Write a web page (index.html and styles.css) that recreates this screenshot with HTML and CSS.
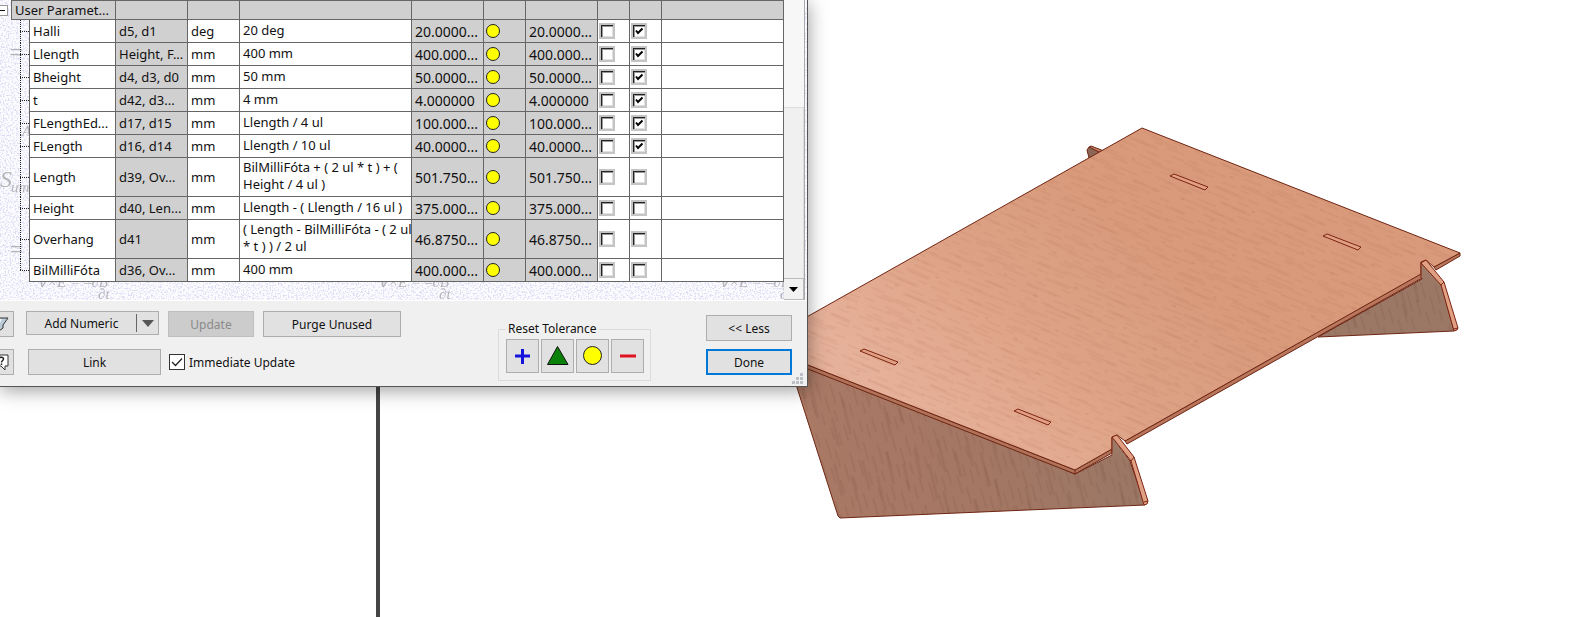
FILE: index.html
```html
<!DOCTYPE html>
<html lang="en">
<head>
<meta charset="utf-8">
<title>Parameters</title>
<link rel="stylesheet" href="styles.css">
</head>
<body>
<main class="workspace">
  <aside class="browser-pane"></aside>
  <section class="viewport">
    <svg class="model" viewBox="380 0 1205 617" preserveAspectRatio="xMinYMin slice" role="img" aria-label="Wooden stand model">
      <defs>
        <linearGradient id="top" gradientUnits="userSpaceOnUse" x1="940" y1="440" x2="1130" y2="230">
          <stop offset="0" stop-color="#e6b19a"/><stop offset="0.55" stop-color="#dda285"/><stop offset="1" stop-color="#d89a7b"/>
        </linearGradient>
        <linearGradient id="leg" gradientUnits="userSpaceOnUse" x1="820" y1="500" x2="1140" y2="440">
          <stop offset="0" stop-color="#a97965"/><stop offset="0.5" stop-color="#a37764"/><stop offset="1" stop-color="#9b7766"/>
        </linearGradient>
        <pattern id="grainA" width="83" height="31" patternUnits="userSpaceOnUse" patternTransform="rotate(22)">
          <path d="M2 2h14M30 4h22M62 3h12M10 8h18M44 9h9M58 10h20M0 14h11M22 15h20M66 16h13M6 20h24M40 21h14M60 22h9M14 26h10M34 27h26M70 28h11" stroke="#a8583a" stroke-opacity=".1" stroke-width="1.500"/>
        </pattern>
        <pattern id="grainB" width="131" height="47" patternUnits="userSpaceOnUse" patternTransform="rotate(24)">
          <path d="M8 5h30M70 9h40M20 17h26M90 21h30M4 29h34M60 33h28M30 41h40M100 43h22" stroke="#a8583a" stroke-opacity=".08" stroke-width="3"/>
          <path d="M50 13h4M112 30h3M16 37h4" stroke="#7a3a22" stroke-opacity=".18"/>
        </pattern>
        <pattern id="grainC" width="71" height="29" patternUnits="userSpaceOnUse" patternTransform="rotate(74)">
          <path d="M2 2h16M30 4h20M56 7h12M8 9h14M40 12h18M2 15h12M24 17h18M54 20h14M10 23h20M40 26h16" stroke="#5a3424" stroke-opacity=".12" stroke-width="1.500"/>
        </pattern>
        <pattern id="grainD" width="127" height="53" patternUnits="userSpaceOnUse" patternTransform="rotate(77)">
          <path d="M8 5h30M70 11h36M20 19h26M86 25h30M4 33h34M56 39h28M26 47h36" stroke="#5a3424" stroke-opacity=".1" stroke-width="3"/>
        </pattern>
        <path id="legShape" d="M785 350 838 516 840 518 1145 505 1130 461 1112 438V455L1075 474ZM1422 263V279L1318 337 1454 331 1441 283Z"/>
        <path id="plate" d="M1142 128 1460 253 1434 267 1426 260 1421 262V274L1125 441 1117 435 1112 437V449L1075 470 757 345Z"/>
      </defs>
      <g stroke="#6e2412" stroke-width="1" stroke-linejoin="round">
        <path fill="#8b6656" d="M1087 150 1089 147 1103 152 1089 158Z"/>
        <path fill="#c58468" d="M1089 147 1091 146 1104 151 1101 153Z"/>
        <use href="#legShape" fill="url(#leg)"/>
      </g>
      <use href="#legShape" fill="url(#grainC)"/>
      <use href="#legShape" fill="url(#grainD)"/>
      <g stroke="#6e2412" stroke-width="1" stroke-linejoin="round">
        <path fill="#b07359" d="M757 345 1075 470 1112 449V453L1075 474 757 349Z"/>
        <path fill="#b8775d" d="M1125 441 1422 273V278L1127 444ZM1434 267 1460 253V256L1436 270Z"/>
        <use href="#plate" fill="url(#top)"/>
      </g>
      <use href="#plate" fill="url(#grainA)"/>
      <use href="#plate" fill="url(#grainB)"/>
      <g stroke="#7e2411" stroke-width="1" stroke-linejoin="round" fill="#e0a084">
        <path fill="#9d7967" d="M1112 437V454L1128 459Z" stroke="none"/>
        <path fill="#9d7967" d="M1421 262V278L1436 278Z" stroke="none"/>
        <path fill="none" d="M1112 453V437M1421 278V262M1075 470V474"/>
        <path d="M1112 437 1117 435 1134 457 1148 501 1147 504 1144 505 1131 461Z"/>
        <path d="M1421 263 1426 260 1444 282 1458 328 1457 330 1454 331 1441 285Z"/>
        <path fill="none" d="M1144 502 1148 501M1454 329 1458 328M1131 461 1134 457M1441 285 1444 282"/>
        <path d="M1170 176 1174 174 1208 187 1205 190Z"/>
        <path d="M1323 236 1327 234 1361 247 1358 250Z"/>
        <path d="M860 351 864 349 898 362 895 365Z"/>
        <path d="M1014 411 1018 409 1051 422 1048 425Z"/>
      </g>
    </svg>
  </section>

  <section class="dialog" role="dialog" aria-label="Parameters">
    <div class="list">
      <svg class="paper" aria-hidden="true">
        <defs>
          <filter id="speckle" x="0" y="0" width="100%" height="100%">
            <feTurbulence type="fractalNoise" baseFrequency="0.6" numOctaves="2" seed="8"/>
            <feColorMatrix values="0 0 0 0 0.72  0 0 0 0 0.72  0 0 0 0 0.9  5 0 0 0 -2.4"/>
          </filter>
          <pattern id="formulas" width="341" height="197" patternUnits="userSpaceOnUse">
            <g class="formula">
              <text x="37" y="90">∇×E = –∂B</text><text x="98" y="102">∂t</text>
              <text class="symbol" x="0" y="187">S</text><text x="11" y="192">um</text>
              <text class="symbol" x="8" y="60">=</text><text x="22" y="136">A</text>
            </g>
          </pattern>
        </defs>
        <rect width="100%" height="100%" fill="#fcfcff"/>
        <rect width="100%" height="100%" filter="url(#speckle)"/>
        <rect width="100%" height="100%" fill="url(#formulas)"/>
      </svg>
      <table class="params">
        <colgroup><col class="c-gutter"><col class="c-tree"><col class="c-name"><col class="c-value"><col class="c-unit"><col class="c-equation"><col class="c-value"><col class="c-tolerance"><col class="c-value"><col class="c-check"><col class="c-check"><col class="c-comment"></colgroup>
        <thead>
          <tr><td class="gutter"><button class="toggle" aria-label="Collapse User Parameters"></button></td><th colspan="2">User Paramet...</th><th></th><th></th><th></th><th></th><th></th><th></th><th></th><th></th><th></th></tr>
        </thead>
        <tbody>
          <tr><td class="gutter"></td><td class="tree"></td><td>Halli</td><td class="ro">d5, d1</td><td>deg</td><td class="eq">20 deg</td><td class="ro num">20.0000...</td><td class="ro"><i class="dot"></i></td><td class="ro num">20.0000...</td><td class="ck"><input type="checkbox" aria-label="Key Halli"></td><td class="ck"><input type="checkbox" aria-label="Export Halli" checked></td><td></td></tr>
          <tr><td class="gutter"></td><td class="tree"></td><td>Llength</td><td class="ro">Height, F...</td><td>mm</td><td class="eq">400 mm</td><td class="ro num">400.000...</td><td class="ro"><i class="dot"></i></td><td class="ro num">400.000...</td><td class="ck"><input type="checkbox" aria-label="Key Llength"></td><td class="ck"><input type="checkbox" aria-label="Export Llength" checked></td><td></td></tr>
          <tr><td class="gutter"></td><td class="tree"></td><td>Bheight</td><td class="ro">d4, d3, d0</td><td>mm</td><td class="eq">50 mm</td><td class="ro num">50.0000...</td><td class="ro"><i class="dot"></i></td><td class="ro num">50.0000...</td><td class="ck"><input type="checkbox" aria-label="Key Bheight"></td><td class="ck"><input type="checkbox" aria-label="Export Bheight" checked></td><td></td></tr>
          <tr><td class="gutter"></td><td class="tree"></td><td>t</td><td class="ro">d42, d3...</td><td>mm</td><td class="eq">4 mm</td><td class="ro num">4.000000</td><td class="ro"><i class="dot"></i></td><td class="ro num">4.000000</td><td class="ck"><input type="checkbox" aria-label="Key t"></td><td class="ck"><input type="checkbox" aria-label="Export t" checked></td><td></td></tr>
          <tr><td class="gutter"></td><td class="tree"></td><td>FLengthEd...</td><td class="ro">d17, d15</td><td>mm</td><td class="eq">Llength / 4 ul</td><td class="ro num">100.000...</td><td class="ro"><i class="dot"></i></td><td class="ro num">100.000...</td><td class="ck"><input type="checkbox" aria-label="Key FLengthEd"></td><td class="ck"><input type="checkbox" aria-label="Export FLengthEd" checked></td><td></td></tr>
          <tr><td class="gutter"></td><td class="tree"></td><td>FLength</td><td class="ro">d16, d14</td><td>mm</td><td class="eq">Llength / 10 ul</td><td class="ro num">40.0000...</td><td class="ro"><i class="dot"></i></td><td class="ro num">40.0000...</td><td class="ck"><input type="checkbox" aria-label="Key FLength"></td><td class="ck"><input type="checkbox" aria-label="Export FLength" checked></td><td></td></tr>
          <tr class="tall"><td class="gutter"></td><td class="tree"></td><td>Length</td><td class="ro">d39, Ov...</td><td>mm</td><td class="eq">BilMilliFóta + ( 2 ul * t ) + (<br>Height / 4 ul )</td><td class="ro num">501.750...</td><td class="ro"><i class="dot"></i></td><td class="ro num">501.750...</td><td class="ck"><input type="checkbox" aria-label="Key Length"></td><td class="ck"><input type="checkbox" aria-label="Export Length"></td><td></td></tr>
          <tr><td class="gutter"></td><td class="tree"></td><td>Height</td><td class="ro">d40, Len...</td><td>mm</td><td class="eq">Llength - ( Llength / 16 ul )</td><td class="ro num">375.000...</td><td class="ro"><i class="dot"></i></td><td class="ro num">375.000...</td><td class="ck"><input type="checkbox" aria-label="Key Height"></td><td class="ck"><input type="checkbox" aria-label="Export Height"></td><td></td></tr>
          <tr class="tall"><td class="gutter"></td><td class="tree"></td><td>Overhang</td><td class="ro">d41</td><td>mm</td><td class="eq">( Length - BilMilliFóta - ( 2 ul<br>* t ) ) / 2 ul</td><td class="ro num">46.8750...</td><td class="ro"><i class="dot"></i></td><td class="ro num">46.8750...</td><td class="ck"><input type="checkbox" aria-label="Key Overhang"></td><td class="ck"><input type="checkbox" aria-label="Export Overhang"></td><td></td></tr>
          <tr><td class="gutter"></td><td class="tree last"></td><td>BilMilliFóta</td><td class="ro">d36, Ov...</td><td>mm</td><td class="eq">400 mm</td><td class="ro num">400.000...</td><td class="ro"><i class="dot"></i></td><td class="ro num">400.000...</td><td class="ck"><input type="checkbox" aria-label="Key BilMilliFóta"></td><td class="ck"><input type="checkbox" aria-label="Export BilMilliFóta"></td><td></td></tr>
        </tbody>
      </table>
      <div class="scrollbar">
        <div class="track"></div>
        <div class="thumb"></div>
        <button class="scroll-down" aria-label="Scroll down"><svg width="9" height="5" viewBox="0 0 9 5"><path d="M0 0H9L4.500 5Z"/></svg></button>
      </div>
    </div>

    <div class="footer">
      <div class="actions">
        <div class="row">
          <button class="btn icon-btn" aria-label="Filter"><svg width="16" height="16" viewBox="0 0 16 16"><path d="M1 2H15L10 9V12L6 15V9Z" fill="#b9cbd8" stroke="#333"/><path d="M3 3H9L7 7Z" fill="#f4f4f4"/></svg></button>
          <div class="split"><button class="split-main">Add Numeric</button><button class="split-more" aria-label="More add options"><svg width="12" height="7" viewBox="0 0 12 7"><path d="M0 0H12L6 7Z" fill="#555"/></svg></button></div>
          <button class="btn mid" disabled>Update</button>
          <button class="btn wide">Purge Unused</button>
        </div>
        <div class="row">
          <button class="btn icon-btn" aria-label="Help"><svg width="16" height="16" viewBox="0 0 16 16"><path d="M1 1H15V12H12V16L8 12H1Z" fill="#fff" stroke="#333"/><path d="M6 5C6 2.500 10.500 2.500 10.500 5C10.500 6.500 8.500 6.500 8.500 8.500" fill="none" stroke="#222" stroke-width="1.500"/><path d="M7.700 9.500H9.300V11H7.700Z" fill="#222"/></svg></button>
          <button class="btn link">Link</button>
          <label class="immediate"><input type="checkbox" checked>Immediate Update</label>
        </div>
      </div>
      <fieldset class="reset">
        <legend>Reset Tolerance</legend>
        <div class="tools">
          <button class="btn tool" aria-label="Upper"><svg width="22" height="22" viewBox="0 0 22 22"><path d="M3 11H18M10.500 4V19" stroke="#1414dc" stroke-width="3"/></svg></button>
          <button class="btn tool" aria-label="Median"><svg width="22" height="22" viewBox="0 0 22 22"><path d="M10.500 1.500 21 19.500H.500Z" fill="#0a820a" stroke="#111"/></svg></button>
          <button class="btn tool" aria-label="Nominal"><svg width="22" height="22" viewBox="0 0 22 22"><circle cx="10.500" cy="10.500" r="9" fill="#ff0" stroke="#222"/></svg></button>
          <button class="btn tool" aria-label="Lower"><svg width="22" height="22" viewBox="0 0 22 22"><path d="M3 11H19" stroke="#e01020" stroke-width="3"/></svg></button>
        </div>
      </fieldset>
      <div class="closing">
        <button class="btn mid">&lt;&lt; Less</button>
        <button class="btn mid done">Done</button>
      </div>
      <svg class="grip" width="12" height="12" viewBox="0 0 12 12" aria-hidden="true"><path d="M8 0h3v3h-3zM4 4h3v3h-3zM8 4h3v3h-3zM0 8h3v3h-3zM4 8h3v3h-3zM8 8h3v3h-3z" fill="#bcc0c6"/></svg>
    </div>
  </section>
</main>
</body>
</html>
```
FILE: styles.css
```css
* { box-sizing: border-box; }

body {
  margin: 0;
  background: #fff;
  color: #111;
  font: 13px/17px "Noto Sans", "Open Sans", sans-serif;
}

button, input { font: inherit; color: inherit; margin: 0; }

.workspace {
  position: relative;
  display: flex;
  height: 100vh;
  overflow: hidden;
}
.browser-pane {
  flex: 0 0 380px;
  border-right: 4px solid #454545;
}
.viewport { flex: 1; min-width: 0; }
.model { display: block; width: 100%; height: 100%; }

/* Floating dialog */
.dialog {
  position: absolute;
  top: 0;
  left: 0;
  background: #f0f0f0;
  border-right: 1px solid #555;
  border-bottom: 1px solid #555;
  box-shadow: 0 3px 18px rgba(0, 0, 0, .4);
}

.list {
  position: relative;
  display: flex;
  padding-right: 2px;
  border-bottom: 1px solid #fff;
}
.paper {
  position: absolute;
  inset: 0;
  width: 100%;
  height: 100%;
}
.formula {
  font: italic 15px "Liberation Serif", serif;
  fill: #b4b4b8;
}
.symbol { font-size: 24px; }

.params {
  position: relative;
  table-layout: fixed;
  width: 784px;
  border-collapse: separate;
  border-spacing: 0;
  margin-bottom: 18px;
}
.c-gutter { width: 11px; }
.c-tree { width: 18px; }
.c-name { width: 86px; }
.c-value { width: 72px; }
.c-unit { width: 52px; }
.c-equation { width: 172px; }
.c-tolerance { width: 42px; }
.c-check { width: 32px; }
.c-comment { width: 123px; }

.params th, .params td {
  height: 23px;
  padding: 0 0 0 3px;
  border-left: 1px solid #666;
  border-bottom: 1px solid #666;
  background: #fff;
  font-weight: normal;
  text-align: left;
  white-space: nowrap;
}
.params thead th, .params thead td { height: 20px; }
.params th {
  border-top: 1px solid #666;
  background: #d0d0d0;
}
.params tr > :last-child { border-right: 1px solid #666; }
.params .tall td { height: 39px; }
.params .ro { background: #d0d0d0; }
.params .num { font-size: 14px; }
.params .eq { padding: 0 0 2px 3px; }
.params .ck { padding: 0 0 1px 1px; }
.params .gutter, .params .tree {
  border: 0;
  padding: 0;
  background: none;
}
.params .tree {
  background:
    repeating-linear-gradient(90deg, #222 0 1px, transparent 1px 2px) 9px 50% / 9px 1px no-repeat,
    repeating-linear-gradient(#222 0 1px, transparent 1px 2px) 9px 0 / 1px 100% no-repeat;
}
.params .last {
  background-size: 9px 1px, 1px 50%;
}
.toggle {
  display: block;
  width: 8px;
  height: 11px;
  padding: 0;
  border: 1px solid #999;
  border-left: 0;
  background: linear-gradient(#111, #111) 0 4px / 5px 1px no-repeat #fff;
}
.dot {
  display: block;
  width: 14px;
  height: 14px;
  margin-left: -1px;
  border: 1px solid #222;
  border-radius: 50%;
  background: #ff0;
}

.ck input {
  appearance: none;
  display: block;
  width: 16px;
  height: 16px;
  border: 2px solid #c4c4c4;
  background: #fff;
  box-shadow: inset 1px 1px #222, inset 2px 2px #999, inset -1px -1px #e0e0e0;
}
.ck input:checked {
  background: url("data:image/svg+xml,%3Csvg xmlns='http://www.w3.org/2000/svg' viewBox='0 0 12 12'%3E%3Cpath d='M3 5.500 5 8 9.500 3.500' fill='none' stroke='%23000' stroke-width='2'/%3E%3C/svg%3E") #fff;
}

.scrollbar {
  position: relative;
  display: flex;
  flex-direction: column;
  width: 21px;
  border-right: 1px solid #aaa;
}
.track { flex: 0 0 107px; background: #f7f7f7; }
.thumb {
  flex: 1;
  border-top: 1px solid #ddd;
  border-right: 1px solid #ddd;
  background: #f0f0f0;
}
.scroll-down {
  display: grid;
  place-items: center;
  height: 22px;
  padding: 0;
  border: 1px solid #bbb;
  border-left: 0;
  background: #f2f2f2;
}

/* Footer */
.footer {
  position: relative;
  display: flex;
  align-items: flex-start;
  padding: 10px 15px 5px 0;
  font-size: 12px;
}
.actions { display: grid; gap: 12px; }
.row { display: flex; height: 26px; }
.btn {
  height: 26px;
  padding: 0;
  border: 1px solid #adadad;
  background: #e1e1e1;
  color: #111;
}
.btn:disabled { background: #ccc; border-color: #bfbfbf; color: #8a8a8a; }
.icon-btn {
  display: flex;
  justify-content: flex-end;
  align-items: center;
  width: 14px;
  padding-right: 4px;
  border-left: 0;
  overflow: hidden;
}
.icon-btn svg { flex: none; }
.split {
  display: flex;
  width: 133px;
  height: 24px;
  margin: 0 9px 0 12px;
  padding: 2px 0;
  border: 1px solid #adadad;
  background: #e1e1e1;
}
.split button { border: 0; padding: 0; background: none; }
.split-main { flex: 1; }
.split .split-more {
  display: grid;
  place-items: center;
  width: 22px;
  border-left: 1px solid #666;
}
.mid { width: 86px; }
.wide { width: 138px; margin-left: 9px; }
.link { width: 133px; margin-left: 14px; }
.immediate {
  display: flex;
  align-items: center;
  gap: 4px;
  margin-left: 8px;
}
.immediate input {
  appearance: none;
  width: 16px;
  height: 16px;
  border: 1px solid #333;
  background: url("data:image/svg+xml,%3Csvg xmlns='http://www.w3.org/2000/svg' viewBox='0 0 14 14'%3E%3Cpath d='M2 7 5.500 10.500 12 3.500' fill='none' stroke='%23222' stroke-width='1.300'/%3E%3C/svg%3E") #fff;
}

.reset {
  margin: 8px 0 0 auto;
  padding: 0 6px 7px 7px;
  border: 1px solid #dcdcdc;
}
.reset legend { padding: 0 2px; line-height: 20px; }
.tools { display: flex; gap: 2px; }
.tool {
  display: grid;
  place-items: center;
  width: 33px;
  height: 34px;
}
.closing {
  display: grid;
  gap: 8px;
  margin: 4px 0 0 55px;
}
.done { border: 2px solid #0078d7; }
.grip { position: absolute; right: 3px; bottom: 1px; }
```
